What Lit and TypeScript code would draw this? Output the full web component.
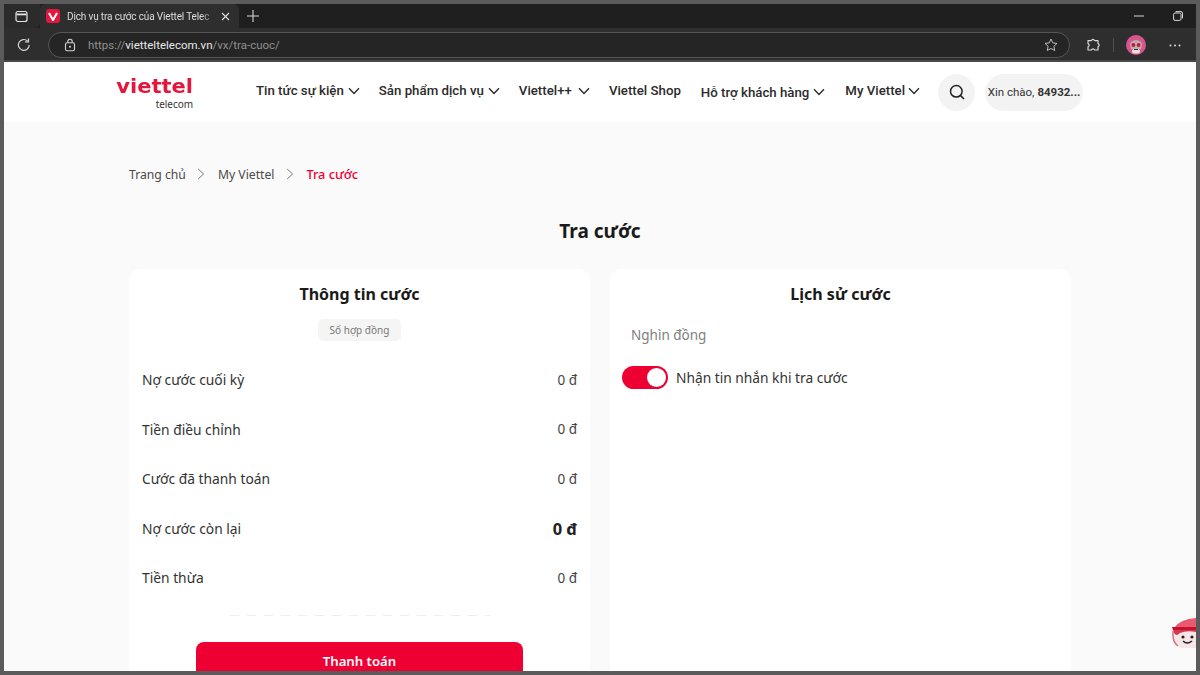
import { LitElement, html, css, svg } from 'lit';
import { customElement } from 'lit/decorators.js';

const chevron = html`<svg class="chev" width="12" height="8" viewBox="0 0 12 8"><path d="M1 1.2 6 6.4 11 1.2" fill="none" stroke="#2b2b2b" stroke-width="1.4"/></svg>`;
const crumbSep = html`<svg class="sep" width="8" height="12" viewBox="0 0 8 12"><path d="M1.2 1 6.6 6 1.2 11" fill="none" stroke="#777" stroke-width="1"/></svg>`;

const navItems = [
  { label: 'Tin tức sự kiện', caret: 4, gap: 19 },
  { label: 'Sản phẩm dịch vụ', caret: 4, gap: 19 },
  { label: 'Viettel++', caret: 6, gap: 19 },
  { label: 'Viettel Shop', caret: 0, gap: 20 },
  { label: 'Hỗ trợ khách hàng', caret: 4, gap: 20 },
  { label: 'My Viettel', caret: 3, gap: 18 },
];

const rows = [
  { label: 'Nợ cước cuối kỳ', value: '0 đ' },
  { label: 'Tiền điều chỉnh', value: '0 đ' },
  { label: 'Cước đã thanh toán', value: '0 đ' },
  { label: 'Nợ cước còn lại', value: '0 đ', strong: true },
  { label: 'Tiền thừa', value: '0 đ' },
];

const avatar = svg`
  <circle cx="10" cy="10" r="10" fill="#d9548f"/>
  <path d="M4 10C3.5 3.5 16.5 3.5 16 10L15 14H5Z" fill="#b4afb0"/>
  <circle cx="7.4" cy="10" r="1.9" fill="#d3122e"/>
  <circle cx="12.6" cy="10" r="1.9" fill="#d3122e"/>
  <path d="M6 15Q10 12.5 14 15L13.5 18.5H6.5Z" fill="#efe2e4"/>
  <path d="M8 14.5h4" stroke="#3a2a2e" stroke-width="1"/>`;

@customElement('app-root')
export class AppRoot extends LitElement {
  static styles = css`
    :host {
      display: block;
      width: 1200px;
      height: 675px;
      box-sizing: border-box;
      padding: 4px;
      background: #5b5b5b;
      overflow: hidden;
      font-family: 'Noto Sans', sans-serif;
      position: relative;
    }
    .window {
      height: 667px;
      display: flex;
      flex-direction: column;
      overflow: hidden;
      background: #fafafa;
    }

    .tabs {
      height: 24px;
      flex: none;
      background: #1f1f1f;
      display: flex;
      align-items: center;
      color: #e6e6e6;
    }
    .tab-toggle {
      width: 36px;
      height: 24px;
      box-sizing: border-box;
      padding-right: 2px;
      display: flex;
      align-items: center;
      justify-content: center;
      background: #2b2b2b;
      border-bottom-right-radius: 6px;
    }
    .tab {
      width: 199px;
      height: 24px;
      flex: none;
      background: #2e2e2e;
      border-radius: 6px 6px 0 0;
      display: flex;
      align-items: center;
      padding: 0 9px 0 6px;
      box-sizing: border-box;
      font: 400 10px 'Roboto', sans-serif;
      letter-spacing: -0.15px;
    }
    .favicon {
      width: 14px;
      height: 14px;
      flex: none;
      border-radius: 3px;
      background: #e2173f;
      display: flex;
      align-items: center;
      justify-content: center;
      margin-right: 7px;
    }
    .tab-title {
      flex: 1;
      min-width: 0;
      white-space: nowrap;
      color: #dcdcdc;
      -webkit-mask-image: linear-gradient(90deg, #000 90%, transparent 100%);
      mask-image: linear-gradient(90deg, #000 90%, transparent 100%);
    }
    .tab-close { margin-left: 5px; flex: none; }
    .new-tab { margin-left: 8px; }
    .win-controls {
      margin-left: auto;
      display: flex;
      align-items: center;
      gap: 29px;
      padding-right: 13px;
    }

    .toolbar {
      height: 34px;
      flex: none;
      box-sizing: border-box;
      background: #2e2e2e;
      border-bottom: 2px solid #4a4a4a;
      padding: 2px 0 0 12px;
      display: flex;
      align-items: center;
    }
    .address {
      width: 1022px;
      height: 26px;
      box-sizing: border-box;
      margin-left: 16px;
      border: 1px solid #565656;
      border-radius: 13px;
      background: #252525;
      display: flex;
      align-items: center;
      padding: 0 11px 0 15px;
      font: 400 11.5px 'Roboto', sans-serif;
      color: #8f8f8f;
    }
    .address .lock { margin-right: 12px; }
    .address b { font-weight: 400; color: #e8e8e8; }
    .address .star { margin-left: auto; }
    .toolbar-right {
      display: flex;
      align-items: center;
      margin-left: 16px;
    }
    .divider { width: 1px; height: 14px; background: #4f4f4f; margin: 0 12px 0 13px; }
    .dots { margin-left: 23px; }

    .header {
      height: 60px;
      flex: none;
      background: #fff;
      display: flex;
      align-items: center;
      padding-left: 113px;
      box-sizing: border-box;
    }
    .logo {
      width: 76px;
      margin-right: 63px;
      display: flex;
      flex-direction: column;
      align-items: flex-end;
    }
    .logo .brand {
      font: 700 20px/24px 'DejaVu Sans', sans-serif;
      color: #e3173e;
      transform: scaleX(1.05);
      transform-origin: right center;
    }
    .logo .sub {
      font: 400 10px/12px 'Noto Sans', sans-serif;
      color: #333;
      letter-spacing: -0.05px;
    }
    .nav { display: flex; align-items: center; height: 24px; }
    .nav-item {
      display: flex;
      align-items: center;
      font: 500 13.25px 'Roboto', sans-serif;
      color: #2b2b2b;
      white-space: nowrap;
      margin-bottom: 3px;
    }
    .nav-item:nth-child(5) { margin-bottom: 0; }
    .search {
      width: 37px;
      height: 37px;
      border-radius: 50%;
      background: #f3f3f3;
      display: flex;
      align-items: center;
      justify-content: center;
      flex: none;
    }
    .user {
      width: 98px;
      height: 37px;
      border-radius: 18.5px;
      background: #f3f3f3;
      margin-left: 10px;
      display: flex;
      align-items: center;
      justify-content: center;
      font: 400 11.5px 'Roboto', sans-serif;
      color: #333;
      white-space: nowrap;
      flex: none;
    }
    .user b { font-weight: 700; margin-left: 3px; }

    .main {
      flex: 1;
      min-height: 0;
      padding: 0 125px;
      overflow: hidden;
    }
    .crumbs {
      display: flex;
      align-items: center;
      height: 20px;
      margin-top: 42px;
      font-size: 12.2px;
      color: #4a4a4a;
    }
    .crumbs .sep { margin: 0 13px 0 11px; }
    .crumbs .current { color: #ee0033; font-weight: 500; font-size: 12.7px; }
    h1 {
      margin: 34px 0 0;
      text-align: center;
      font-size: 19px;
      line-height: 26px;
      font-weight: 700;
      color: #1a1a1a;
    }
    .cards {
      display: grid;
      grid-template-columns: 461px 461px;
      gap: 20px;
      margin-top: 25px;
    }
    .card {
      background: #fff;
      border-radius: 12px;
      height: 460px;
      box-sizing: border-box;
      padding: 13px 13px 0;
    }
    h2 {
      margin: 0;
      text-align: center;
      font-size: 16px;
      line-height: 24px;
      font-weight: 700;
      color: #1a1a1a;
    }
    .pill-wrap { display: flex; justify-content: center; margin-top: 13px; }
    .pill {
      width: 83px;
      height: 22px;
      border-radius: 5px;
      background: #f5f5f5;
      color: #777;
      font-size: 10px;
      display: flex;
      align-items: center;
      justify-content: center;
    }
    .rows { margin-top: 14px; }
    .row {
      height: 49.5px;
      display: flex;
      align-items: center;
      justify-content: space-between;
      font-size: 13.8px;
      color: #333;
    }
    .row .val { font-size: 13.5px; color: #444; }
    .row .val.strong { font-weight: 700; font-size: 16.5px; color: #222; }
    .dash {
      width: 260px;
      height: 1px;
      margin: 12px auto 0;
      background: repeating-linear-gradient(90deg, #eeeeee 0 9px, transparent 9px 17px);
    }
    .pay {
      display: block;
      width: 327px;
      height: 44px;
      margin: 26px auto 0;
      border: 0;
      border-radius: 8px 8px 0 0;
      background: #ee0033;
      color: #fff;
      font: 600 13.2px 'Noto Sans', sans-serif;
      padding: 0 0 6px;
    }
    .unit {
      margin: 19px 0 0 8px;
      font-size: 13.5px;
      line-height: 20px;
      color: #808080;
    }
    .notify {
      display: flex;
      align-items: center;
      margin-top: 21px;
      margin-left: -1px;
      font-size: 13.75px;
      color: #333;
    }
    .toggle {
      width: 46px;
      height: 23px;
      border-radius: 12px;
      background: #ee0033;
      display: flex;
      align-items: center;
      justify-content: flex-end;
      padding-right: 2px;
      box-sizing: border-box;
      margin-right: 8px;
    }
    .knob { width: 19px; height: 19px; border-radius: 50%; background: #fff; }

    .mascot { position: absolute; left: 1171px; top: 618px; }
  `;

  render() {
    return html`
      <div class="window">
        <div class="tabs">
          <div class="tab-toggle">
            <svg width="13" height="13" viewBox="0 0 13 13"><rect x="1" y="1.5" width="11" height="10" rx="2" fill="none" stroke="#e6e6e6" stroke-width="1.2"/><path d="M1.5 4.4h10" stroke="#e6e6e6" stroke-width="1.8"/></svg>
          </div>
          <div class="tab">
            <span class="favicon"><svg width="10" height="9" viewBox="0 0 10 9"><path d="M1 1 5 8 9 1" fill="none" stroke="#fff" stroke-width="2"/></svg></span>
            <span class="tab-title">Dịch vụ tra cước của Viettel Telec</span>
            <svg class="tab-close" width="9" height="9" viewBox="0 0 9 9"><path d="M1 1l7 7M8 1 1 8" stroke="#e0e0e0" stroke-width="1.1"/></svg>
          </div>
          <svg class="new-tab" width="12" height="12" viewBox="0 0 12 12"><path d="M6 0v12M0 6h12" stroke="#d8d8d8" stroke-width="1.1"/></svg>
          <div class="win-controls">
            <svg width="10" height="2" viewBox="0 0 10 2"><path d="M0 1h10" stroke="#d8d8d8" stroke-width="1"/></svg>
            <svg width="10" height="10" viewBox="0 0 10 10"><rect x="0.6" y="2" width="7.4" height="7.4" rx="1.4" fill="none" stroke="#d8d8d8"/><path d="M2.6 .6H8a1.5 1.5 0 0 1 1.5 1.5V7.4" fill="none" stroke="#d8d8d8"/></svg>
          </div>
        </div>
        <div class="toolbar">
          <svg width="16" height="16" viewBox="0 0 16 16"><path d="M13.2 8A5.4 5.4 0 1 1 11.5 4" fill="none" stroke="#d4d4d4" stroke-width="1.2"/><path d="M12.5 1.4V4.8H9.1" fill="none" stroke="#d4d4d4" stroke-width="1.2"/></svg>
          <div class="address">
            <svg class="lock" width="12" height="14" viewBox="0 0 12 14"><rect x="1.5" y="4.8" width="9" height="8" rx="1.6" fill="none" stroke="#d4d4d4" stroke-width="1.1"/><path d="M3.8 4.6V3.4a2.2 2.2 0 0 1 4.4 0v1.2" fill="none" stroke="#d4d4d4" stroke-width="1.1"/><circle cx="6" cy="8.8" r="1" fill="#d4d4d4"/></svg>
            <span>https://<b>vietteltelecom.vn</b>/vx/tra-cuoc/</span>
            <svg class="star" width="14" height="14" viewBox="0 0 14 14"><path d="M7 1l1.8 3.9 4.2.5-3.1 2.9.8 4.2L7 10.5l-3.7 2 .8-4.2L1 5.4l4.2-.5z" fill="none" stroke="#bdbdbd" stroke-width="1"/></svg>
          </div>
          <div class="toolbar-right">
            <svg width="14" height="14" viewBox="0 0 14 14"><path d="M5.4 2.6a1.7 1.7 0 0 1 3.2 0H12v3a1.7 1.7 0 0 1 0 3.2V12H8.6a1.7 1.7 0 0 0-3.2 0H2V8.8a1.7 1.7 0 0 0 0-3.2V2.6z" fill="none" stroke="#d8d8d8" stroke-width="1.2" stroke-linejoin="round"/></svg>
            <span class="divider"></span>
            <svg width="20" height="20" viewBox="0 0 20 20">${avatar}</svg>
            <svg class="dots" width="12" height="3" viewBox="0 0 12 3"><circle cx="1.5" cy="1.5" r="1" fill="#d8d8d8"/><circle cx="6" cy="1.5" r="1" fill="#d8d8d8"/><circle cx="10.5" cy="1.5" r="1" fill="#d8d8d8"/></svg>
          </div>
        </div>

        <header class="header">
          <div class="logo">
            <span class="brand">viettel</span>
            <span class="sub">telecom</span>
          </div>
          <nav class="nav">
            ${navItems.map(
              (item) => html`<div class="nav-item" style="margin-right:${item.gap}px;gap:${item.caret}px">
                ${item.label}${item.caret ? chevron : ''}
              </div>`
            )}
          </nav>
          <div class="search">
            <svg width="16" height="16" viewBox="0 0 16 16"><circle cx="7.3" cy="7.3" r="5.8" fill="none" stroke="#222" stroke-width="1.5"/><path d="M11.6 11.6 15 15" stroke="#222" stroke-width="1.5"/></svg>
          </div>
          <div class="user">Xin chào,<b>84932...</b></div>
        </header>

        <main class="main">
          <div class="crumbs">
            <span>Trang chủ</span>${crumbSep}<span>My Viettel</span>${crumbSep}<span class="current">Tra cước</span>
          </div>
          <h1>Tra cước</h1>
          <div class="cards">
            <section class="card">
              <h2>Thông tin cước</h2>
              <div class="pill-wrap"><span class="pill">Số hợp đồng</span></div>
              <div class="rows">
                ${rows.map(
                  (r) => html`<div class="row">
                    <span>${r.label}</span>
                    <span class="val ${r.strong ? 'strong' : ''}">${r.value}</span>
                  </div>`
                )}
              </div>
              <div class="dash"></div>
              <button class="pay">Thanh toán</button>
            </section>
            <section class="card">
              <h2>Lịch sử cước</h2>
              <div class="unit">Nghìn đồng</div>
              <div class="notify">
                <span class="toggle"><span class="knob"></span></span>
                <span>Nhận tin nhắn khi tra cước</span>
              </div>
            </section>
          </div>
        </main>
      </div>
      <svg class="mascot" width="25" height="32" viewBox="0 0 25 32">
        <path d="M3 10Q9 1 25 0V10Z" fill="#ea5a6e"/>
        <path d="M1 9H25V12H2Z" fill="#c8102e"/>
        <path d="M2 12H25V30H9Q2 26 2 12Z" fill="#f7e6e8"/>
        <path d="M2 12Q4 20 9 15 16 12 25 14V12Z" fill="#d13a52"/>
        <path d="M2 13Q1 24 7 28" fill="none" stroke="#d9707f" stroke-width="1.5"/>
        <circle cx="12" cy="19" r="1.6" fill="#2d2024"/>
        <circle cx="21" cy="19" r="1.6" fill="#2d2024"/>
        <path d="M12 23Q16 27 21 23" fill="none" stroke="#2d2024" stroke-width="1.4"/>
      </svg>
    `;
  }
}
